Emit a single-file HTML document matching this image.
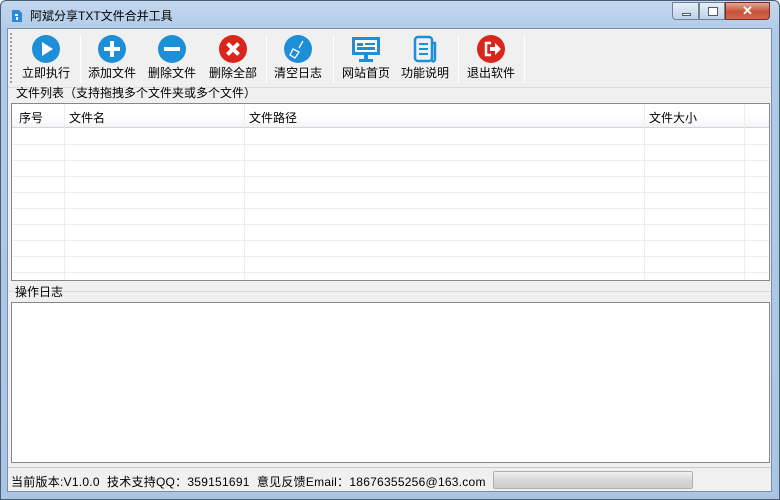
<!DOCTYPE html>
<html><head><meta charset="utf-8"><style>
*{margin:0;padding:0;box-sizing:border-box}
body{width:780px;height:500px;overflow:hidden;background:#fff;font-family:"Liberation Sans","Noto Sans CJK SC",sans-serif;font-size:12px;color:#000;position:relative}
.win{position:absolute;left:0;top:0;width:780px;height:500px;background:linear-gradient(#c4d8ee,#b0cbe8 30px,#aac6e4);border:1px solid #4a5d75;border-radius:6px 6px 0 0}
.title{position:absolute;left:29px;top:6px;font-size:12px}
.client{position:absolute;left:7px;top:28px;width:765px;height:464px;background:#f0f0f0;border:1px solid #7b8ea6}
.a{position:absolute}
.btn{position:absolute;top:6px;width:60px;text-align:center}
.btn .ic{width:28px;height:28px;margin:0 auto;position:relative}
.btn .lb{margin-top:1px;white-space:nowrap}
.sep{position:absolute;top:6px;width:1px;height:48px;background:#d5d5d5;border-right:1px solid #fff}
.grid{position:absolute;left:3px;top:74px;width:759px;height:178px;background:#fff;border:1px solid #828790;overflow:hidden}
.hl{position:absolute;left:0;width:759px;height:1px;background:#ededed}
.vl{position:absolute;top:0;width:1px;height:178px;background:#ededed}
.log{position:absolute;left:3px;top:273px;width:759px;height:161px;background:#fff;border:1px solid #828790}
</style></head><body>
<div class="win">
<svg class="a" style="left:10px;top:8px" width="12" height="14"><path d="M1 1h7l3 3v9H1z" fill="#2a8ad8"/><rect x="4" y="5" width="3" height="2" fill="#fff"/><rect x="5" y="8" width="2" height="3" fill="#fff"/></svg>
<div class="title">阿斌分享TXT文件合并工具</div>
<div class="a" style="left:671px;top:1px;width:27px;height:18px;border:1px solid #6f819a;border-radius:0 0 0 4px;background:linear-gradient(#e6eef8,#c0d2e8)"><div class="a" style="left:9px;top:10px;width:9px;height:3px;background:#fff;border:1px solid #4b5b70"></div></div>
<div class="a" style="left:698px;top:1px;width:26px;height:18px;border:1px solid #6f819a;background:linear-gradient(#e6eef8,#c0d2e8)"><div class="a" style="left:8px;top:4px;width:10px;height:9px;border:1px solid #4b5b70;background:#fff"></div></div>
<div class="a" style="left:724px;top:1px;width:45px;height:18px;border:1px solid #7a2b22;border-radius:0 0 4px 0;background:linear-gradient(#e8a493,#c8503a 55%,#d06a50);color:#fff;font-weight:bold;text-align:center;font-size:13px;line-height:16px">✕</div>
</div>
<div class="client">
<div class="a" style="left:2px;top:4px;width:2px;height:50px;border-left:2px dotted #a0a0a0"></div>
<div class="btn" style="left:8px"><div class="ic"><svg width="28" height="28"><circle cx="14" cy="14" r="14" fill="#1d8fd8"/><path d="M10 7l11 7-11 7z" fill="#fff"/></svg></div><div class="lb">立即执行</div></div>
<div class="sep" style="left:72px"></div>
<div class="btn" style="left:74px"><div class="ic"><svg width="28" height="28"><circle cx="14" cy="14" r="14" fill="#1d8fd8"/><path d="M14 6v16M6 14h16" stroke="#fff" stroke-width="4"/></svg></div><div class="lb">添加文件</div></div>
<div class="btn" style="left:134px"><div class="ic"><svg width="28" height="28"><circle cx="14" cy="14" r="14" fill="#1d8fd8"/><path d="M6 14h16" stroke="#fff" stroke-width="4"/></svg></div><div class="lb">删除文件</div></div>
<div class="btn" style="left:195px"><div class="ic"><svg width="28" height="28"><circle cx="14" cy="14" r="14" fill="#d9251b"/><path d="M8.5 8.5l11 11M19.5 8.5l-11 11" stroke="#fff" stroke-width="4"/></svg></div><div class="lb">删除全部</div></div>
<div class="sep" style="left:258px"></div>
<div class="btn" style="left:260px"><div class="ic"><svg width="28" height="28"><circle cx="14" cy="14" r="14" fill="#1d8fd8"/><path d="M19 6l-4 7M9 14l6 3-4 6-5-3z" stroke="#fff" stroke-width="1.3" fill="none"/></svg></div><div class="lb">清空日志</div></div>
<div class="sep" style="left:325px"></div>
<div class="btn" style="left:328px"><div class="ic"><svg width="28" height="28"><rect x="0" y="2" width="28" height="18" fill="#1d8fd8"/><rect x="3" y="5" width="22" height="12" fill="#fff"/><rect x="5" y="8" width="6" height="3" fill="#1d8fd8"/><rect x="13" y="8" width="10" height="2" fill="#1d8fd8"/><rect x="5" y="12" width="18" height="3" fill="#1d8fd8"/><rect x="12" y="20" width="4" height="4" fill="#1d8fd8"/><rect x="7" y="24" width="14" height="3" fill="#1d8fd8"/></svg></div><div class="lb">网站首页</div></div>
<div class="btn" style="left:387px"><div class="ic"><svg width="28" height="28"><rect x="4" y="2" width="17" height="24" rx="3" fill="none" stroke="#1d8fd8" stroke-width="2.5"/><path d="M21 8h3v16a2 2 0 0 1-3 2" fill="none" stroke="#1d8fd8" stroke-width="2.5"/><path d="M8 9h9M8 14h9M8 19h9" stroke="#1d8fd8" stroke-width="2"/></svg></div><div class="lb">功能说明</div></div>
<div class="sep" style="left:450px"></div>
<div class="btn" style="left:453px"><div class="ic"><svg width="28" height="28"><circle cx="14" cy="14" r="14" fill="#d9251b"/><path d="M14 8H9v12h5" fill="none" stroke="#fff" stroke-width="2.5"/><path d="M13 12h5V8l6 6-6 6v-4h-5z" fill="#fff"/></svg></div><div class="lb">退出软件</div></div>
<div class="sep" style="left:516px"></div>
<div class="a" style="left:0;top:58px;width:763px;height:1px;background:#dcdcdc"></div>
<div class="a" style="left:8px;top:55px">文件列表（支持拖拽多个文件夹或多个文件）</div>
<div class="grid">
<div class="a" style="left:0;top:0;width:759px;height:24px;background:linear-gradient(#fff,#fff 50%,#f4f5f7);border-bottom:1px solid #d5d5d5"></div>
<div class="a" style="left:7px;top:5px">序号</div>
<div class="a" style="left:57px;top:5px">文件名</div>
<div class="a" style="left:237px;top:5px">文件路径</div>
<div class="a" style="left:637px;top:5px">文件大小</div>
<div class="vl" style="left:52px"></div><div class="vl" style="left:232px"></div><div class="vl" style="left:632px"></div><div class="vl" style="left:732px"></div>
<div class="hl" style="top:40px"></div><div class="hl" style="top:56px"></div><div class="hl" style="top:72px"></div><div class="hl" style="top:88px"></div><div class="hl" style="top:104px"></div><div class="hl" style="top:120px"></div><div class="hl" style="top:136px"></div><div class="hl" style="top:152px"></div><div class="hl" style="top:168px"></div>
</div>
<div class="a" style="left:0;top:262px;width:763px;height:1px;background:#dcdcdc"></div>
<div class="a" style="left:7px;top:254px">操作日志</div>
<div class="log"></div>
<div class="a" style="left:0;top:438px;width:763px;height:1px;background:#c8c8c8"></div>
<div class="a" style="left:3px;top:444px;white-space:nowrap;letter-spacing:0.25px">当前版本:V1.0.0&nbsp; 技术支持QQ：359151691&nbsp; 意见反馈Email：18676355256@163.com</div>
<div class="a" style="left:485px;top:442px;width:200px;height:18px;border:1px solid #b0b0b0;border-radius:2px;background:linear-gradient(#f2f2f2,#d8d8d8 50%,#cdcdcd)"></div>
</div>
</body></html>
